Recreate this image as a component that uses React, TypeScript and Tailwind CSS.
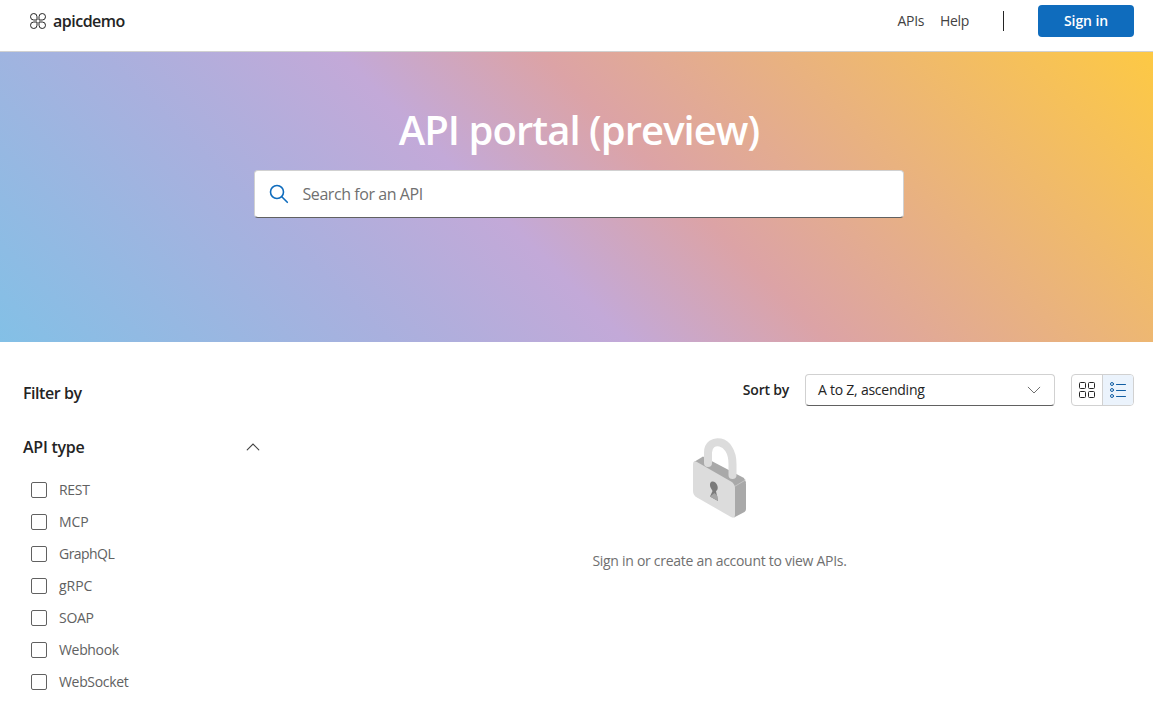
import React from "react";

const types = [
  { name: "REST", track: "tracking-[-0.3px]" },
  { name: "MCP", track: "tracking-[-0.1px]" },
  { name: "GraphQL", track: "tracking-[-0.55px]" },
  { name: "gRPC", track: "tracking-[-0.05px]" },
  { name: "SOAP", track: "tracking-[-0.3px]" },
  { name: "Webhook", track: "tracking-[-0.33px]" },
  { name: "WebSocket", track: "tracking-[-0.33px]" },
];

function Logo() {
  return (
    <svg width="16" height="16" viewBox="0 0 16 16" fill="none" stroke="#242424" strokeWidth="1">
      <path d="M7 7H3.75A3.250 3.250 0 1 1 7 3.750Z" />
      <path d="M9 7V3.750A3.250 3.250 0 1 1 12.250 7Z" />
      <path d="M7 9V12.250A3.250 3.250 0 1 1 3.750 9Z" />
      <path d="M9 9H12.250A3.250 3.250 0 1 1 9 12.250Z" />
    </svg>
  );
}

function Lock() {
  return (
    <svg width="54" height="80" viewBox="0 0 54 80">
      <path d="M1 24 10 18.500 51 40 53 45 42 51Z" fill="#a9a9a9" />
      <path d="M40 48 51 41Q53 43 53 46V71Q53 73 51.500 74L41 79.500Z" fill="#a9a9a9" />
      <path d="M41.500 48.500 52.500 42" stroke="#c4c4c4" strokeWidth="1" />
      <path d="M15 25V14.500C15 -1 39.500 -.5 39.500 26V37" fill="none" stroke="#dcdcdc" strokeWidth="8" strokeLinecap="round" />
      <path d="M0 26Q0 22 4 24L38 43.500Q42 46 42 50V77Q42 81 38 79L4 59.500Q0 57 0 53Z" fill="#dcdcdc" />
      <path d="M17.300 49C15.500 42 22.500 42 24.500 48C25.300 51 24 52.500 23 53L25 63 17 58.500 19.500 53Z" fill="#7a7a7a" />
      <path d="M17 58.500 21.500 55 24.500 58 25 63Z" fill="#a6a6a6" />
    </svg>
  );
}

export default function App() {
  return (
    <div className="h-[713px] w-full overflow-hidden bg-white font-['Open_Sans','Noto_Sans',sans-serif] text-sm text-[#242424]">
      <header className="flex h-[52px] items-start border-b border-[#d1d1d1] pr-[19px] pl-[30px]">
        <div className="flex h-[42px] items-center">
          <Logo />
          <span className="ml-[7px] text-base leading-[22px] font-semibold tracking-[-0.5px]">apicdemo</span>
        </div>
        <nav className="ml-auto flex h-[42px] items-center text-[#424242]">
          <a className="w-[42.500px] tracking-[-0.3px]">APIs</a>
          <a className="w-[63px] tracking-[-0.3px]">Help</a>
          <span className="h-5 w-px bg-[#242424]" />
          <button className="ml-[34px] h-8 w-24 rounded bg-[#0f6cbd] text-sm font-semibold tracking-[-0.1px] text-white">Sign in</button>
        </nav>
      </header>

      <section className="flex h-[290px] flex-col items-center bg-[linear-gradient(45deg,#83c0e6_0%,#a9b0de_27%,#c3a9d8_43.500%,#dca3a6_57.500%,#fdc944_100%)] pl-[5px]">
        <h1 className="mt-[52px] h-[54px] text-[40px] leading-[52px] font-semibold tracking-[-0.95px] whitespace-nowrap text-white">API portal (preview)</h1>
        <div className="mt-3 flex h-12 w-[650px] items-center rounded border border-[#d1d1d1] border-b-[#616161] bg-white pl-[14px]">
          <svg width="20" height="20" viewBox="0 0 20 20" fill="none" stroke="#0f6cbd" strokeWidth="1.6" strokeLinecap="round">
            <circle cx="8" cy="8" r="6.500" />
            <path d="m12.800 12.800 5.500 5.500" />
          </svg>
          <span className="ml-[13.500px] text-base tracking-[-0.43px] text-[#707070]">Search for an API</span>
        </div>
      </section>

      <main className="flex">
        <aside className="w-[284px] pl-[23px]">
          <h2 className="mt-[40px] text-base leading-[22px] font-semibold tracking-[-0.45px]">Filter by</h2>
          <div className="mt-8 flex h-[22px] w-[237px] items-center justify-between">
            <h3 className="text-base leading-[22px] font-semibold tracking-[-0.25px]">API type</h3>
            <svg width="14" height="8" viewBox="0 0 14 8" fill="none" stroke="#424242" strokeWidth="1.1" strokeLinecap="round"><path d="m1.200 6.800 5.800-5.800 5.800 5.800" /></svg>
          </div>
          <ul className="mt-4 pl-2">
            {types.map((t) => (
              <li key={t.name} className="flex h-8 items-center text-[#616161]">
                <span className="h-4 w-4 rounded-[2px] border border-[#616161]" />
                <span className={"ml-3 " + t.track}>{t.name}</span>
              </li>
            ))}
          </ul>
        </aside>
        <div className="flex flex-1 flex-col pr-[19px]">
          <div className="mt-8 flex h-8 items-center justify-end">
            <span className="font-semibold tracking-[-0.22px]">Sort by</span>
            <div className="ml-4 flex h-8 w-[250px] items-center justify-between rounded border border-[#d1d1d1] border-b-[#616161] pr-[13px] pl-3">
              <span className="tracking-[-0.24px]">A to Z, ascending</span>
              <svg width="14" height="8" viewBox="0 0 14 8" fill="none" stroke="#707070" strokeWidth="1" strokeLinecap="round"><path d="m1.200 1.200 5.800 5.800 5.800-5.800" /></svg>
            </div>
            <div className="ml-4 flex h-8 w-[63px] overflow-hidden rounded border border-[#d1d1d1]">
              <span className="flex w-[31px] items-center justify-center border-r border-[#d1d1d1]">
                <svg width="16" height="16" viewBox="0 0 16 16" fill="none" stroke="#242424"><rect x=".5" y=".5" width="6" height="6" rx="1" /><rect x="9.500" y=".5" width="6" height="6" rx="1" /><rect x=".5" y="9.500" width="6" height="6" rx="1" /><rect x="9.500" y="9.500" width="6" height="6" rx="1" /></svg>
              </span>
              <span className="flex flex-1 items-center justify-center bg-[#ebf3fc]">
                <svg width="16" height="16" viewBox="0 0 16 16" fill="none" stroke="#115ea3" strokeLinecap="round"><circle cx="2" cy="2" r="1.500" /><circle cx="2" cy="8" r="1.500" /><circle cx="2" cy="14" r="1.500" /><path d="M6.500 2.500h9M6.500 8.500h9M6.500 14.500h9" /></svg>
              </span>
            </div>
          </div>
          <div className="mt-8 flex flex-col items-center pl-[21px]">
            <Lock />
            <p className="mt-[33px] leading-5 tracking-[-0.28px] text-[#707070]">Sign in or create an account to view APIs.</p>
          </div>
        </div>
      </main>
    </div>
  );
}
